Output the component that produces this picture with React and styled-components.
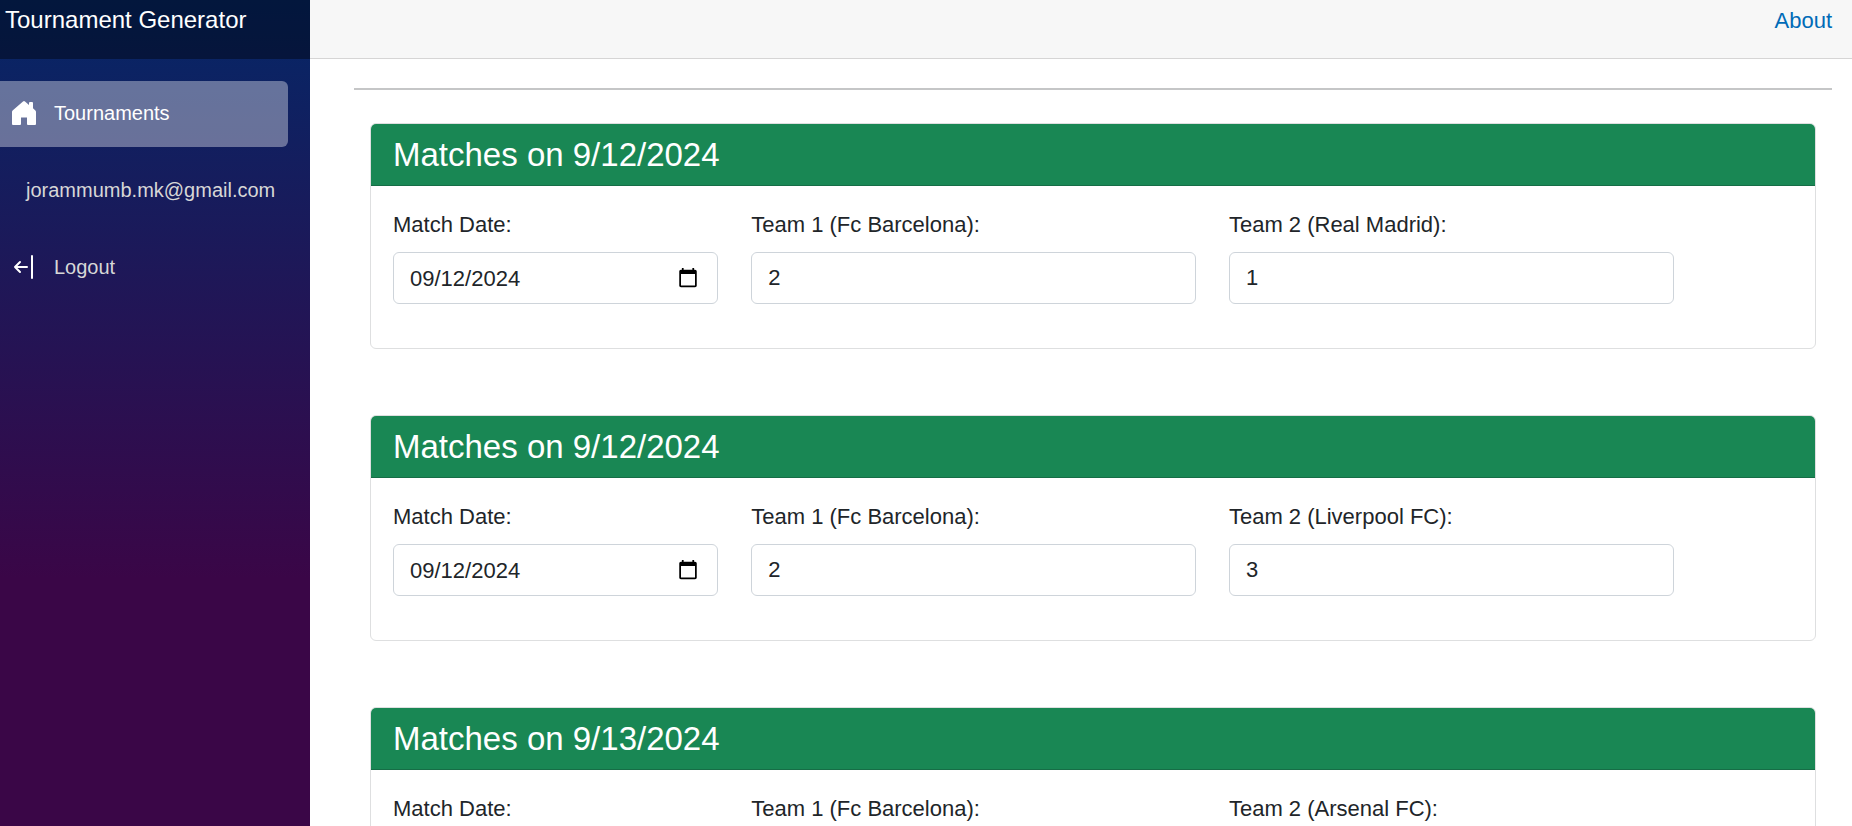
import React, { useId } from "react";
import styled, { createGlobalStyle } from "styled-components";

const GlobalStyle = createGlobalStyle`
  *, *::before, *::after { box-sizing: border-box; }
  body {
    margin: 0;
    background: #fff;
    color: #212529;
    font-family: "Liberation Sans", Arial, sans-serif;
    font-size: 22px;
    line-height: 33px;
  }
`;

const Page = styled.div`
  display: flex;
  height: 100vh;
`;

const Sidebar = styled.aside`
  flex: 0 0 310px;
  background: linear-gradient(180deg, rgb(5, 39, 103) 0%, #3a0647 70%);
`;

const Brand = styled.header`
  height: 59px;
  padding: 3px 5px;
  background: rgba(0, 0, 0, 0.4);
`;

const BrandLink = styled.a`
  color: #fff;
  font-size: 24px;
  text-decoration: none;
`;

const Nav = styled.nav`
  display: flex;
  flex-direction: column;
  gap: 11px;
  padding: 22px 22px 22px 0;
`;

const NavItem = styled.a`
  display: flex;
  align-items: center;
  gap: 16px;
  height: 66px;
  padding: 0 0 2px ${(p) => (p.$plain ? 26 : 10)}px;
  border: 0;
  border-radius: ${(p) => (p.$active ? "0 6px 6px 0" : 0)};
  background: ${(p) => (p.$active ? "rgba(255, 255, 255, 0.37)" : "none")};
  color: ${(p) => (p.$active ? "#fff" : "#d7d7d7")};
  font-family: inherit;
  font-size: 20px;
  text-decoration: none;
  cursor: pointer;
`;

const NavIcon = styled.svg`
  flex: none;
  width: 28px;
  height: 28px;
  color: #fff;
`;

const Main = styled.main`
  display: flex;
  flex: 1;
  flex-direction: column;
  min-width: 0;
`;

const TopBar = styled.div`
  display: flex;
  flex: none;
  justify-content: flex-end;
  height: 59px;
  padding: 4px 20px;
  border-bottom: 1px solid #d6d5d5;
  background: #f7f7f7;
`;

const TopLink = styled.a`
  color: #006bb7;
  text-decoration: none;
`;

const Content = styled.article`
  flex: 1;
  min-height: 0;
  padding: 29px 20px 0 44px;
  overflow-y: auto;
  scrollbar-width: none;
`;

const Divider = styled.hr`
  height: 2px;
  margin: 0 0 33px;
  border: 0;
  background: #c5c6c7;
`;

const MatchList = styled.div`
  display: flex;
  flex-direction: column;
  gap: 66px;
  padding: 0 16px 66px;
`;

const Card = styled.section`
  border: 1px solid #dedfe0;
  border-radius: 6px;
  background: #fff;
  overflow: hidden;
`;

const CardTitle = styled.h3`
  margin: 0;
  padding: 11px 22px;
  border-bottom: 1px solid #166d46;
  background: #198754;
  color: #fff;
  font-size: 33px;
  font-weight: 400;
  line-height: 39px;
`;

const CardBody = styled.div`
  display: grid;
  grid-template-columns: repeat(12, minmax(0, 1fr));
  column-gap: 33px;
  padding: 22px 22px 44px;
`;

const FieldGroup = styled.div`
  display: flex;
  grid-column: span ${(p) => p.$span};
  flex-direction: column;
  gap: 11px;
`;

const Input = styled.input`
  width: 100%;
  height: 52px;
  padding: 8px 16px;
  border: 1px solid #ced4da;
  border-radius: 6px;
  background: #fff;
  color: #212529;
  font: inherit;
  appearance: none;

  &::-webkit-datetime-edit-fields-wrapper,
  &::-webkit-datetime-edit-month-field,
  &::-webkit-datetime-edit-day-field,
  &::-webkit-datetime-edit-year-field {
    padding: 0;
  }
`;

function HouseIcon() {
  return (
    <NavIcon viewBox="0 0 28 28" aria-hidden="true">
      <path
        fill="currentColor"
        d="M13 2.4 2.6 11.4Q2 12 2 12.8V25q0 1 1 1h7q1 0 1-1v-6.5h6V25q0 1 1 1h7q1 0 1-1V12.8q0-.8-.6-1.4L23 9.3V4q0-1-1-1h-2q-1 0-1 1v1.9l-4-3.5q-1-.8-2 0Z"
      />
    </NavIcon>
  );
}

function LogoutIcon() {
  return (
    <NavIcon viewBox="0 0 28 28" aria-hidden="true">
      <path
        fill="none"
        stroke="currentColor"
        strokeWidth="2"
        strokeLinecap="round"
        strokeLinejoin="round"
        d="M22 3v22M17 14H5M10 9l-5 5 5 5"
      />
    </NavIcon>
  );
}

function Field({ label, span, ...inputProps }) {
  const id = useId();
  return (
    <FieldGroup $span={span}>
      <label htmlFor={id}>{label}</label>
      <Input id={id} {...inputProps} />
    </FieldGroup>
  );
}

function MatchCard({ title, date, home, away }) {
  return (
    <Card>
      <CardTitle>Matches on {title}</CardTitle>
      <CardBody>
        <Field span={3} label="Match Date:" type="date" defaultValue={date} />
        <Field span={4} label={`Team 1 (${home.name}):`} type="number" defaultValue={home.score} />
        <Field span={4} label={`Team 2 (${away.name}):`} type="number" defaultValue={away.score} />
      </CardBody>
    </Card>
  );
}

const matches = [
  { title: "9/12/2024", date: "2024-09-12", home: { name: "Fc Barcelona", score: 2 }, away: { name: "Real Madrid", score: 1 } },
  { title: "9/12/2024", date: "2024-09-12", home: { name: "Fc Barcelona", score: 2 }, away: { name: "Liverpool FC", score: 3 } },
  { title: "9/13/2024", date: "2024-09-13", home: { name: "Fc Barcelona", score: 0 }, away: { name: "Arsenal FC", score: 0 } },
];

export default function App() {
  return (
    <>
      <GlobalStyle />
      <Page>
        <Sidebar>
          <Brand>
            <BrandLink href="#">Tournament Generator</BrandLink>
          </Brand>
          <Nav>
            <NavItem href="#tournaments" $active>
              <HouseIcon />
              Tournaments
            </NavItem>
            <NavItem href="#account" $plain>jorammumb.mk@gmail.com</NavItem>
            <NavItem as="button" type="button">
              <LogoutIcon />
              Logout
            </NavItem>
          </Nav>
        </Sidebar>
        <Main>
          <TopBar>
            <TopLink href="#about">About</TopLink>
          </TopBar>
          <Content>
            <Divider />
            <MatchList>
              {matches.map((match) => (
                <MatchCard key={match.away.name} {...match} />
              ))}
            </MatchList>
          </Content>
        </Main>
      </Page>
    </>
  );
}
